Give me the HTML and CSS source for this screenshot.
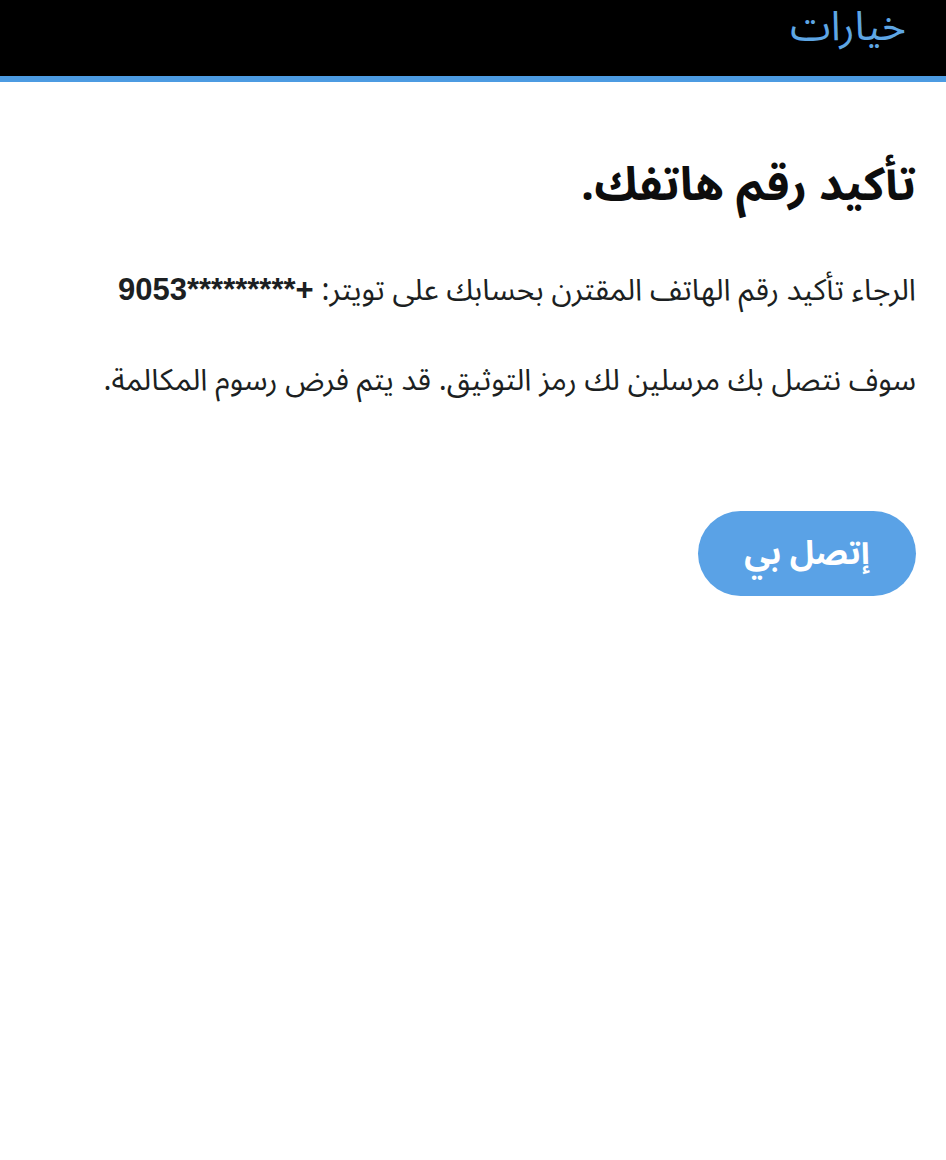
FILE: index.html
```html
<!DOCTYPE html>
<html lang="ar" dir="rtl">
<head>
<meta charset="utf-8">
<link rel="stylesheet" href="styles.css">
</head>
<body>
<header class="topbar">
  <span class="options">خيارات</span>
</header>
<main class="content">
  <h1 class="title">تأكيد رقم هاتفك.</h1>
  <p class="text">الرجاء تأكيد رقم الهاتف المقترن بحسابك على تويتر: <b class="phone">+*********9053</b></p>
  <p class="text">سوف نتصل بك مرسلين لك رمز التوثيق. قد يتم فرض رسوم المكالمة.</p>
  <div class="actions">
    <button class="call">إتصل بي</button>
  </div>
</main>
</body>
</html>
```
FILE: styles.css
```css
html, body {
  margin: 0;
  padding: 0;
  background: #ffffff;
}
body {
  font-family: "Noto Sans Arabic", "DejaVu Sans", "Noto Sans", sans-serif;
  color: #14171a;
}
.topbar {
  height: 76px;
  background: #000000;
  border-bottom: 6px solid #4c9be2;
  display: flex;
  align-items: flex-start;
  padding-right: 40px;
}
.options {
  color: #5ea6e4;
  font-size: 41px;
  line-height: 54px;
}
.content {
  padding: 0 30px 0 30px;
}
.title {
  margin: 74px 0 0 0;
  font-size: 46px;
  font-weight: bold;
  line-height: 60px;
  color: #0d0d0d;
}
.text {
  margin: 0;
  font-size: 30px;
  line-height: 44px;
  color: #1c1f22;
}
.title + .text {
  margin-top: 52px;
}
.text + .text {
  margin-top: 46px;
}
.phone {
  font-family: "Liberation Sans", "DejaVu Sans", sans-serif;
  font-weight: bold;
  font-size: 31px;
}
.actions {
  display: flex;
  margin-top: 108px;
}
.call {
  width: 218px;
  height: 85px;
  border: none;
  border-radius: 43px;
  background: #5aa2e6;
  color: #ffffff;
  font-family: inherit;
  font-size: 33px;
  font-weight: bold;
  padding: 0;
}
```
